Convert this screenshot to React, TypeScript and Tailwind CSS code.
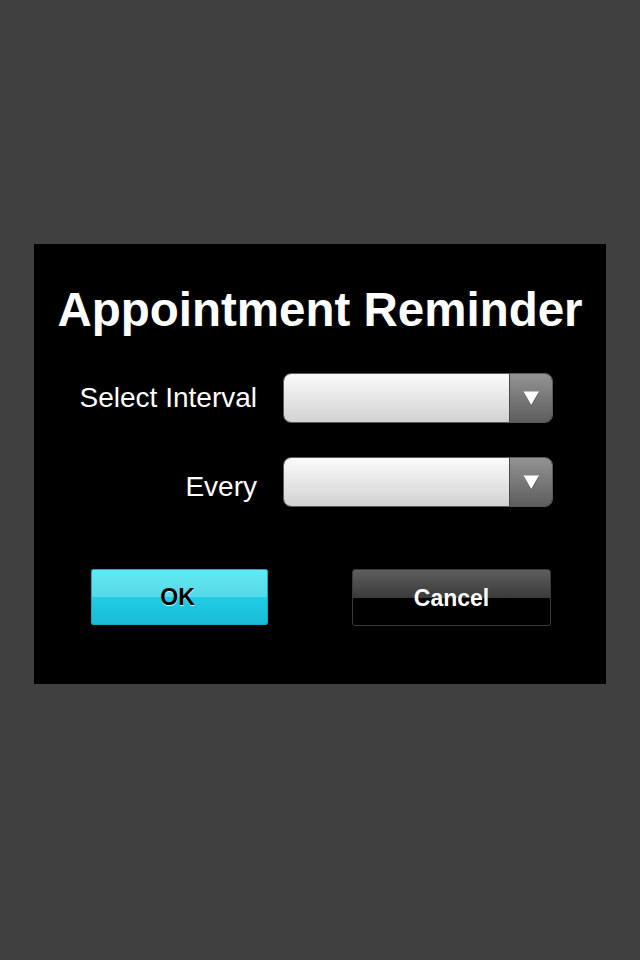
import React from "react";

function Select() {
  return (
    <div className="flex h-[50px] w-[270px] overflow-hidden rounded-[8px] border border-[#5a5a5a]">
      <div className="flex-1 bg-gradient-to-b from-[#fbfbfb] to-[#d2d2d2]" />
      <div className="flex w-[43px] items-center justify-center border-l border-[#4a4a4a] bg-gradient-to-b from-[#939393] to-[#5e5e5e]">
        <svg width="17" height="15" viewBox="0 0 17 15">
          <polygon points="1,2 16,2 8.5,15" fill="#3a3a3a" opacity="0.6" />
          <polygon points="0.5,0.5 16,0.5 8.25,14" fill="#ffffff" />
        </svg>
      </div>
    </div>
  );
}

export default function App() {
  return (
    <div
      className="min-h-[960px] w-full bg-[#404040] pt-[244px]"
      style={{ fontFamily: '"Liberation Sans", Arial, sans-serif' }}
    >
      <div className="ml-[34px] flex h-[440px] w-[572px] flex-col bg-black pt-[38px]">
        <h1 className="text-center text-[47.5px] font-bold leading-[56px] text-white">
          Appointment Reminder
        </h1>
        <div className="mt-[35px] flex flex-col gap-[34px]">
          <div className="flex items-center gap-[26px]">
            <div className="w-[223px] text-right text-[28px] leading-[50px] text-white">
              Select Interval
            </div>
            <Select />
          </div>
          <div className="flex items-center gap-[26px]">
            <div className="h-[50px] w-[223px] pt-[10px] text-right text-[28px] leading-[40px] text-white">
              Every
            </div>
            <Select />
          </div>
        </div>
        <div className="mt-[62px] flex items-start">
          <button className="relative ml-[57px] flex h-[56px] w-[177px] items-center justify-center overflow-hidden rounded-[2px] border border-[#15a9bd]">
            <div className="absolute inset-x-0 top-0 h-1/2 bg-gradient-to-b from-[#62e8f2] to-[#54d9e8]" />
            <div className="absolute inset-x-0 bottom-0 h-1/2 bg-gradient-to-b from-[#20cde5] to-[#19bcd6]" />
            <span className="relative mr-[4px] text-[23px] font-bold text-black [text-shadow:0_1px_0_rgba(255,255,255,0.8)]">
              OK
            </span>
          </button>
          <button className="relative ml-[84px] flex h-[57px] w-[199px] items-center justify-center overflow-hidden rounded-[3px] border border-[#3a3a3a] bg-black">
            <div className="absolute inset-x-0 top-0 h-1/2 bg-gradient-to-b from-[#5e5e5e] to-[#3a3a3a]" />
            <span className="relative mt-[2px] text-[23px] font-bold text-white">
              Cancel
            </span>
          </button>
        </div>
      </div>
    </div>
  );
}
